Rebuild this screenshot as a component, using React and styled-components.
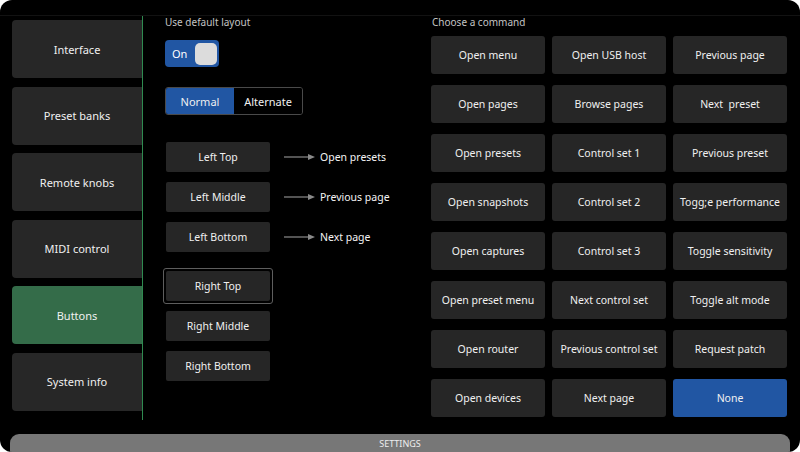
import React, { useState } from 'react';
import styled, { createGlobalStyle } from 'styled-components';

const GlobalStyle = createGlobalStyle`
  html, body {
    margin: 0;
    padding: 0;
    background: #fff;
  }
  body {
    font-family: 'Noto Sans', 'DejaVu Sans', sans-serif;
    -webkit-font-smoothing: antialiased;
  }
`;

const sections = ['Interface', 'Preset banks', 'Remote knobs', 'MIDI control', 'Buttons', 'System info'];

const mapped = [
  { name: 'Left Top', command: 'Open presets' },
  { name: 'Left Middle', command: 'Previous page' },
  { name: 'Left Bottom', command: 'Next page' },
];

const unmapped = ['Right Top', 'Right Middle', 'Right Bottom'];

const commands = [
  'Open menu', 'Open USB host', 'Previous page',
  'Open pages', 'Browse pages', 'Next  preset',
  'Open presets', 'Control set 1', 'Previous preset',
  'Open snapshots', 'Control set 2', 'Togg;e performance',
  'Open captures', 'Control set 3', 'Toggle sensitivity',
  'Open preset menu', 'Next control set', 'Toggle alt mode',
  'Open router', 'Previous control set', 'Request patch',
  'Open devices', 'Next page', 'None',
];

function App() {
  const [section, setSection] = useState('Buttons');
  const [layout, setLayout] = useState('Normal');
  const [selected, setSelected] = useState('Right Top');
  const [command, setCommand] = useState('None');

  return (
    <>
      <GlobalStyle />
      <Screen>
        <Header />
        <Body>
          <Sidebar>
            {sections.map(s => (
              <SideButton key={s} $active={s === section} onClick={() => setSection(s)}>
                {s}
              </SideButton>
            ))}
          </Sidebar>

          <Middle>
            <Label>Use default layout</Label>
            <Toggle>
              <span>On</span>
              <Knob />
            </Toggle>
            <Segments>
              {['Normal', 'Alternate'].map(l => (
                <Segment key={l} $active={l === layout} onClick={() => setLayout(l)}>
                  {l}
                </Segment>
              ))}
            </Segments>

            <ButtonList $top={24}>
              {mapped.map(b => (
                <MapRow key={b.name}>
                  <Frame $selected={selected === b.name}>
                    <PadButton onClick={() => setSelected(b.name)}>{b.name}</PadButton>
                  </Frame>
                  <Arrow width="32" height="8" viewBox="0 0 32 8">
                    <line x1="0" y1="4" x2="26" y2="4" stroke="#8a8a8a" strokeWidth="1.2" />
                    <path d="M24 1 L31 4 L24 7 Z" fill="#8a8a8a" />
                  </Arrow>
                  <Target>{b.command}</Target>
                </MapRow>
              ))}
            </ButtonList>

            <ButtonList $top={13}>
              {unmapped.map(name => (
                <MapRow key={name}>
                  <Frame $selected={selected === name}>
                    <PadButton onClick={() => setSelected(name)}>{name}</PadButton>
                  </Frame>
                </MapRow>
              ))}
            </ButtonList>
          </Middle>

          <Right>
            <Label>Choose a command</Label>
            <Grid>
              {commands.map((c, i) => (
                <Command key={i} $active={c === command} onClick={() => setCommand(c)}>
                  {c}
                </Command>
              ))}
            </Grid>
          </Right>
        </Body>
        <Footer>SETTINGS</Footer>
      </Screen>
    </>
  );
}

export default App;

const Screen = styled.div`
  width: 800px;
  height: 452px;
  background: #000;
  border-radius: 12px;
  overflow: hidden;
  display: flex;
  flex-direction: column;
  color: #e8e8e8;
`;

const Header = styled.div`
  height: 15px;
  border-bottom: 1px solid #121212;
  flex-shrink: 0;
`;

const Body = styled.div`
  display: flex;
  height: 418px;
`;

const Sidebar = styled.div`
  width: 131px;
  margin-left: 12px;
  height: 404px;
  padding-top: 4px;
  box-sizing: border-box;
  border-right: 1px solid #2f8a50;
  display: flex;
  flex-direction: column;
  gap: 8.6px;
`;

const SideButton = styled.div`
  height: 58px;
  flex-shrink: 0;
  display: flex;
  align-items: center;
  justify-content: center;
  background: ${p => (p.$active ? '#346c49' : '#272727')};
  border-radius: 4px 0 0 4px;
  font-size: 11px;
  color: #f0f0f0;
  cursor: pointer;
`;

const Middle = styled.div`
  width: 278px;
  box-sizing: border-box;
  padding-left: 22px;
  display: flex;
  flex-direction: column;
`;

const Label = styled.div`
  font-size: 10px;
  line-height: 12px;
  color: #c4c4c4;
  height: 12px;
`;

const Toggle = styled.div`
  margin-top: 12px;
  width: 54px;
  height: 27px;
  box-sizing: border-box;
  background: #2156a3;
  border-radius: 4px;
  display: flex;
  align-items: center;
  justify-content: space-between;
  padding: 0 2px 0 7px;
  font-size: 11px;
  color: #fff;
`;

const Knob = styled.div`
  width: 22px;
  height: 22px;
  background: #dcdcdc;
  border-radius: 5px;
`;

const Segments = styled.div`
  margin-top: 20px;
  display: flex;
  width: 138px;
  height: 28px;
  box-sizing: border-box;
  border: 1px solid #4a4a4a;
  border-radius: 3px;
  overflow: hidden;
`;

const Segment = styled.div`
  flex: 1;
  display: flex;
  align-items: center;
  justify-content: center;
  font-size: 11px;
  background: ${p => (p.$active ? '#2156a3' : '#000')};
  color: #f0f0f0;
  cursor: pointer;
`;

const ButtonList = styled.div`
  display: flex;
  flex-direction: column;
  gap: 4px;
  margin-top: ${p => p.$top}px;
  margin-left: -2px;
`;

const MapRow = styled.div`
  display: flex;
  align-items: center;
`;

const Frame = styled.div`
  padding: 2px;
  border: 1px solid ${p => (p.$selected ? '#5e5e5e' : 'transparent')};
  border-radius: 3px;
`;

const PadButton = styled.div`
  width: 104px;
  height: 30px;
  display: flex;
  align-items: center;
  justify-content: center;
  background: #262626;
  border-radius: 2px;
  font-size: 10.5px;
  color: #f0f0f0;
  cursor: pointer;
`;

const Arrow = styled.svg`
  margin-left: 11px;
  margin-right: 4px;
`;

const Target = styled.div`
  font-size: 10.5px;
  color: #f4f4f4;
`;

const Right = styled.div`
  flex: 1;
  padding-left: 11px;
  padding-right: 13px;
  display: flex;
  flex-direction: column;
`;

const Grid = styled.div`
  margin-top: 8px;
  margin-left: -1px;
  display: grid;
  grid-template-columns: repeat(3, 1fr);
  grid-auto-rows: 38px;
  column-gap: 7px;
  row-gap: 11px;
`;

const Command = styled.div`
  display: flex;
  align-items: center;
  justify-content: center;
  background: ${p => (p.$active ? '#2156a3' : '#262626')};
  border-radius: 3px;
  font-size: 10.5px;
  color: #f0f0f0;
  white-space: pre;
  cursor: pointer;
`;

const Footer = styled.div`
  margin: 0 10px;
  height: 18px;
  flex-shrink: 0;
  box-sizing: border-box;
  background: #777;
  border-radius: 9px 9px 0 0;
  display: flex;
  align-items: center;
  justify-content: center;
  font-size: 9px;
  color: #eee;
  padding-top: 1px;
`;
